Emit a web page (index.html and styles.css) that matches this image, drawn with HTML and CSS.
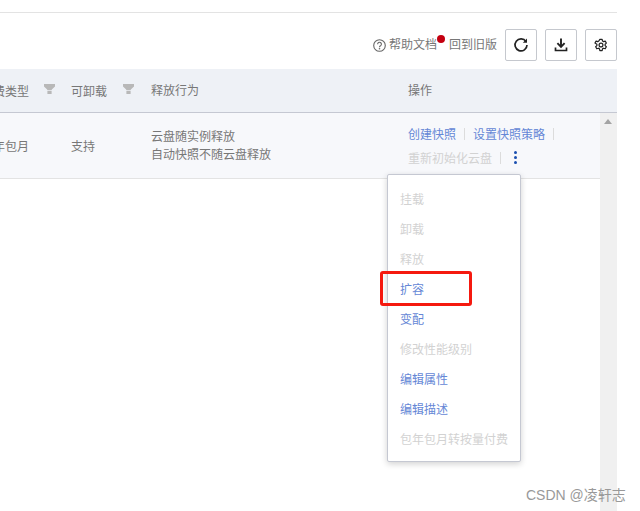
FILE: index.html
```html
<!DOCTYPE html>
<html lang="zh">
<head>
<meta charset="utf-8">
<title>云盘</title>
<link rel="stylesheet" href="styles.css">
</head>
<body>
<div class="page">
  <div class="topline"></div>
  <div class="toolbar">
    <a class="help">
      <svg class="help-icon" viewBox="0 0 13 13" width="13" height="13"><circle cx="6.5" cy="6.5" r="5.8" fill="none" stroke="#666" stroke-width="1.1"/><path d="M4.6 5.2a1.9 1.9 0 1 1 2.9 1.6c-.7.4-1 .7-1 1.4" fill="none" stroke="#666" stroke-width="1.1"/><circle cx="6.5" cy="9.8" r=".8" fill="#666"/></svg>
      <span>帮助文档</span><i class="dot"></i>
    </a>
    <a class="old">回到旧版</a>
    <button class="tool">
      <svg viewBox="0 0 16 16" width="16" height="16"><path d="M13 4.6A6 6 0 1 0 14 8" fill="none" stroke="#222" stroke-width="1.7"/><path d="M14 1.6v4.2H9.8z" fill="#222"/></svg>
    </button>
    <button class="tool">
      <svg viewBox="0 0 16 16" width="16" height="16"><path d="M8 1.5v8" stroke="#222" stroke-width="1.9" fill="none"/><path d="M4.4 6.2 8 9.8l3.6-3.6" stroke="#222" stroke-width="1.9" fill="none"/><path d="M2.5 10.5v3h11v-3" stroke="#222" stroke-width="1.7" fill="none"/></svg>
    </button>
    <button class="tool">
      <svg viewBox="0 0 16 16" width="14" height="14"><path d="M6.7 1.5h2.6l.4 1.9 1.3.7 1.8-.6 1.3 2.3-1.4 1.3v1.6l1.4 1.3-1.3 2.3-1.8-.6-1.3.7-.4 1.9H6.7l-.4-1.9-1.3-.7-1.8.6-1.3-2.3 1.4-1.3V7.1L1.1 5.8l1.3-2.3 1.8.6 1.3-.7z" fill="none" stroke="#222" stroke-width="1.4" stroke-linejoin="round"/><circle cx="8" cy="8" r="2.2" fill="none" stroke="#222" stroke-width="1.4"/></svg>
    </button>
  </div>

  <div class="table-row table-head">
    <div class="cell c-type">计费类型<svg class="filter" viewBox="0 0 11 10" width="11" height="10"><path d="M0 0h11v2.6L7.8 5.4V6H3.2v-.6L0 2.6zM3.4 6.8h4.2V10H3.4z" fill="#b8b8b8"/></svg></div>
    <div class="cell c-unmount">可卸载<svg class="filter" viewBox="0 0 11 10" width="11" height="10"><path d="M0 0h11v2.6L7.8 5.4V6H3.2v-.6L0 2.6zM3.4 6.8h4.2V10H3.4z" fill="#b8b8b8"/></svg></div>
    <div class="cell c-release">释放行为</div>
    <div class="cell c-ops">操作</div>
  </div>

  <div class="body-area">
    <div class="table-main">
      <div class="table-row table-data">
        <div class="cell c-type">包年包月</div>
        <div class="cell c-unmount">支持</div>
        <div class="cell c-release"><div>云盘随实例释放</div><div>自动快照不随云盘释放</div></div>
        <div class="cell c-ops">
          <div class="ops-line"><a class="link">创建快照</a><i class="sep"></i><a class="link">设置快照策略</a><i class="sep"></i></div>
          <div class="ops-line"><a class="off">重新初始化云盘</a><i class="sep"></i><span class="more"><i></i><i></i><i></i></span></div>
        </div>
      </div>
    </div>
    <div class="scrollbar"><span class="arrow"></span></div>
  </div>

  <ul class="menu">
    <li class="off">挂载</li>
    <li class="off">卸载</li>
    <li class="off">释放</li>
    <li class="link">扩容</li>
    <li class="link">变配</li>
    <li class="off">修改性能级别</li>
    <li class="link">编辑属性</li>
    <li class="link">编辑描述</li>
    <li class="off">包年包月转按量付费</li>
  </ul>
  <div class="highlight"></div>
  <div class="watermark">CSDN @凌轩志</div>
</div>
</body>
</html>
```
FILE: styles.css
```css
* { box-sizing: border-box; }
html, body { margin: 0; padding: 0; background: #fff; overflow: hidden; }
body { font-family: "Liberation Sans", "Noto Sans CJK SC", sans-serif; font-size: 12px; color: #777; }
.page { position: relative; width: 640px; height: 511px; overflow: hidden; }
.topline { width: 617px; height: 13px; border-bottom: 1px solid #e3e3e3; }
.toolbar { width: 617px; height: 56px; padding-top: 16px; display: flex; align-items: flex-start; justify-content: flex-end; }
.help, .old { display: flex; align-items: center; height: 32px; color: #777; line-height: 32px; }
.help { position: relative; gap: 3px; }
.help-icon { flex: none; }
.dot { position: absolute; right: -8px; top: 6px; width: 8px; height: 8px; border-radius: 50%; background: #c40010; }
.old { margin-left: 12px; margin-right: 8px; }
.tool { width: 32px; height: 32px; margin-left: 8px; padding: 0; background: #fff; border: 1px solid #c5c8ce; border-radius: 2px; display: flex; align-items: center; justify-content: center; }
.old + .tool { margin-left: 0; }
.table-row { display: flex; width: 617px; overflow: hidden; }
.table-head { height: 44px; background: #eef1f6; border-bottom: 1px solid #c5c8d2; align-items: center; }
.cell { flex: none; white-space: nowrap; }
.c-type { width: 90px; margin-left: -19px; position: relative; }
.c-unmount { width: 80px; position: relative; }
.c-release { width: 257px; line-height: 18px; }
.c-ops { flex: 1; }
.table-head .c-ops { position: relative; top: -1px; }
.filter { position: absolute; top: 2px; left: 63px; }
.c-unmount .filter { left: 52px; }
.body-area { display: flex; width: 617px; height: 398px; }
.table-main { width: 600px; }
.table-data { width: 600px; height: 66px; background: #f7f8fb; border-bottom: 1px solid #e3e3e3; align-items: center; }
.ops-line { height: 24px; display: flex; align-items: center; }
.sep { display: inline-block; width: 1px; height: 12px; background: #dcdcdc; margin: 0 8px; }
.ops-line .sep:last-child { margin-right: 0; }
.link { color: #6587d6; }
.off { color: #d2d2d2; }
.more { display: inline-flex; flex-direction: column; gap: 2px; margin-left: 4px; width: 5px; align-items: center; }
.more i { width: 3px; height: 3px; border-radius: 50%; background: #1a4fb0; }
.scrollbar { width: 17px; background: #f0f0f0; padding: 6px 0 0 4px; }
.arrow { display: block; width: 0; height: 0; border-left: 4px solid transparent; border-right: 4px solid transparent; border-bottom: 5px solid #a3a3a3; }
.menu { position: absolute; left: 387px; top: 174px; width: 134px; height: 288px; margin: 0; padding: 10px 12px 8px; list-style: none; background: #fff; border: 1px solid #c5c8d2; border-radius: 2px; box-shadow: 0 2px 6px rgba(0,0,0,.18); }
.menu li { height: 30px; line-height: 30px; white-space: nowrap; }
.highlight { position: absolute; left: 380px; top: 271px; width: 92px; height: 35px; border: 3px solid #f5190f; border-radius: 3px; }
.watermark { position: absolute; left: 526px; top: 487px; font-size: 14px; line-height: 16px; color: #999; white-space: nowrap; }
```
